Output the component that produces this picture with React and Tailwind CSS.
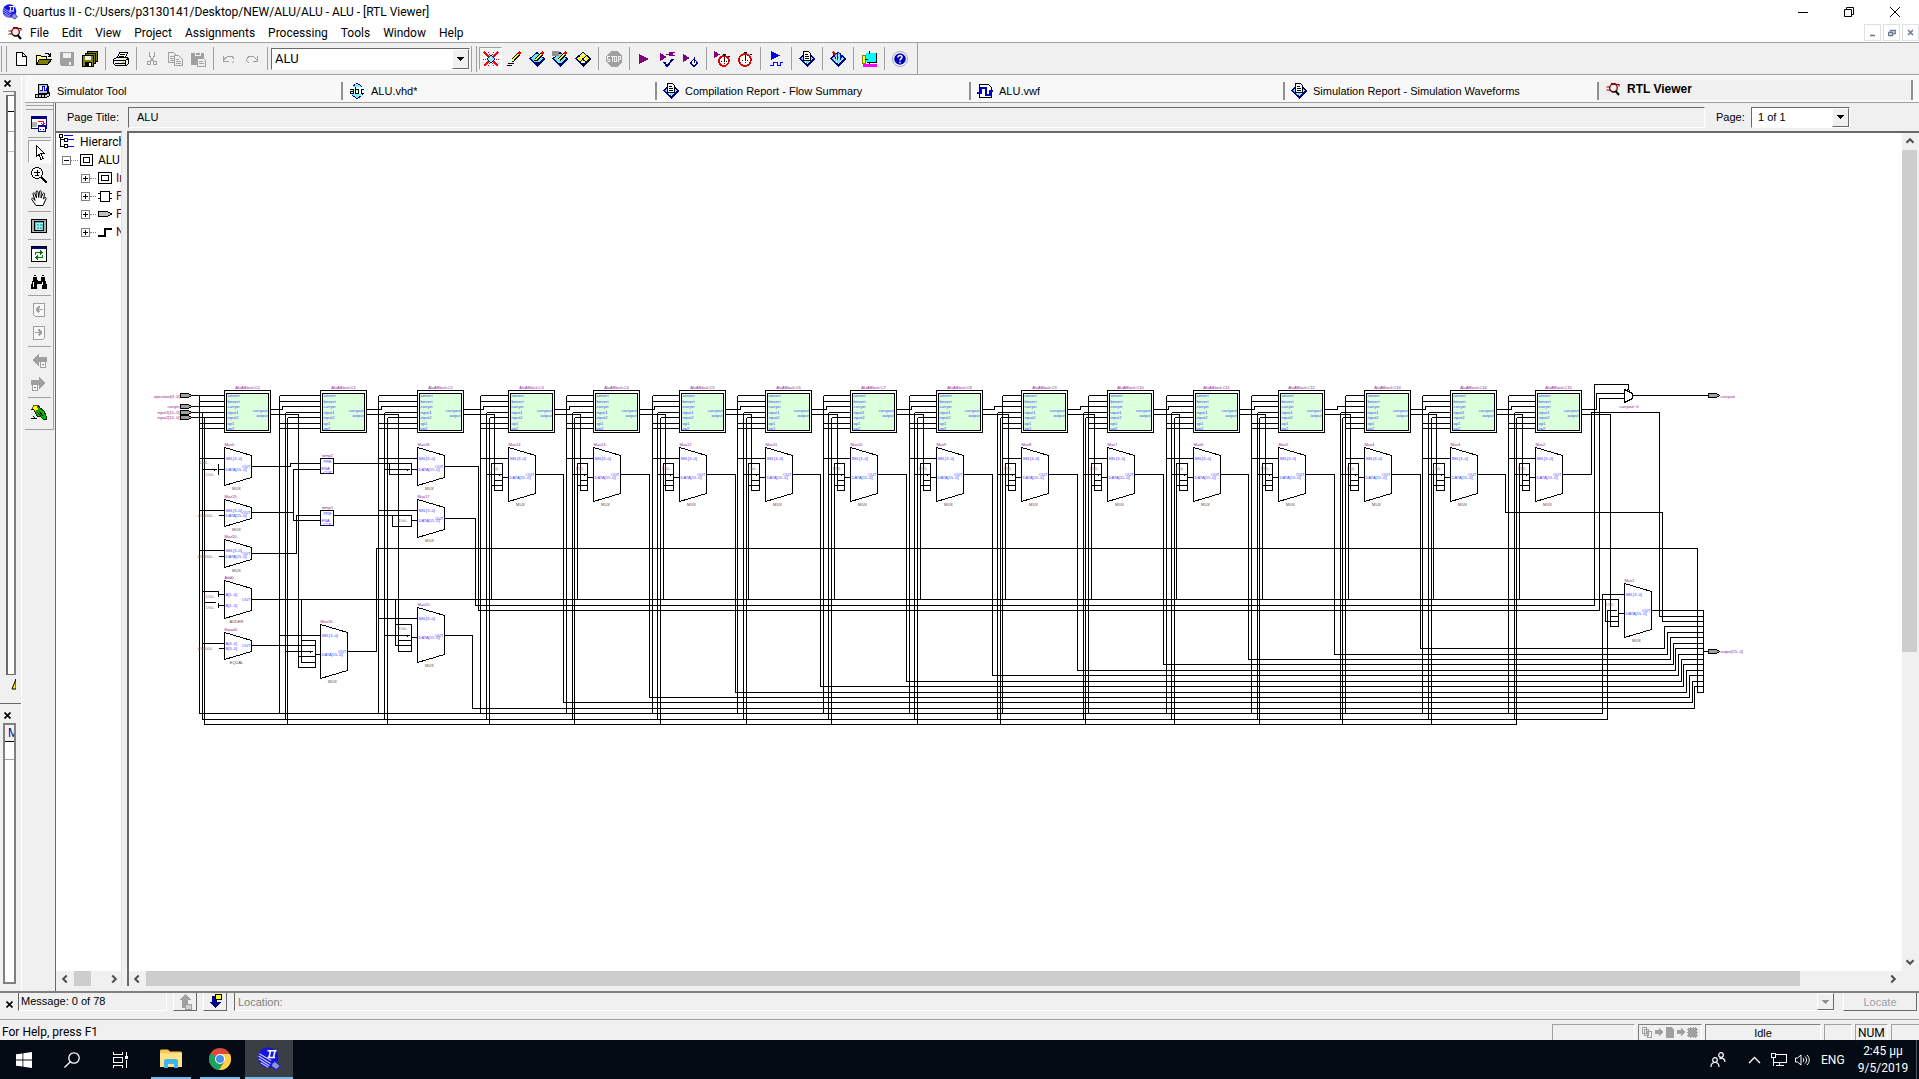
import React from "react";

const UI = "font-['Liberation_Sans',Arial,sans-serif]";
const SEGOE = "font-['Roboto','Open_Sans',sans-serif]";

/* ---------- icons ---------- */
function Icon({ children, size = 16, soft = false }) {
  return (
    <svg
      width={size}
      height={size}
      viewBox="0 0 16 16"
      fill="none"
      stroke="#000"
      shapeRendering={soft ? "auto" : "crispEdges"}
      className="block shrink-0"
      aria-hidden="true"
    >
      {children}
    </svg>
  );
}

const Logo = ({ size = 16 }) => (
  <Icon size={size} soft>
    <circle cx="7.5" cy="7" r="6.8" fill="#1414e0" stroke="none" />
    <path d="M7 2.500h6M9 2.500L8 7M12 2.500L11 7M7 7h5" stroke="#fff" strokeWidth="1" />
    <path d="M1 6l8 5M1.3 8l7 4.5M2.5 10.5l5 3M1.5 4.5l8 4.5" stroke="#c8c8ff" strokeWidth=".8" />
    <path d="M10 11l2-1.5 3.5 3L13 15.2 9.6 13z" fill="#8f95d8" stroke="#22c" strokeWidth=".7" />
  </Icon>
);

const RtlIcon = () => (
  <Icon soft>
    <path d="M1.500 6h4M1.500 9h4M6 2.500h4l2 1.500M12 3.500h2v2" stroke="#800000" strokeWidth="1.200" />
    <circle cx="8.500" cy="7" r="3.800" fill="#e8e8e8" stroke="#800000" strokeWidth="1.300" />
    <path d="M10.500 10l3.500 4" stroke="#000" strokeWidth="2" />
    <path d="M5 9l2 2h3l2-2" stroke="#000" />
    <path d="M6 8l5-3" stroke="#fff" />
  </Icon>
);

const Chip = ({ children }) => (
  <Icon>
    <path d="M0 8l8-7 8 7-8 8z" fill="#000080" stroke="none" />
    <path d="M1 7.500l7-6.500 7 6.500-7 6z" fill="#6fe6ea" stroke="#000080" />
    <path d="M4 8h1M6 6h1M6 10h1M8 8h1M8 4h1M10 6h1M10 10h1M12 8h1M8 12h1" stroke="#fff" />
    {children}
  </Icon>
);
const ReportIcon = () => (
  <Chip>
    <path d="M4.500 .5h5l2 2v7h-7z" fill="#fff" stroke="#000" />
    <path d="M6 3.500h3M6 5.500h4M6 7.500h4" stroke="#000" />
  </Chip>
);
const Pencil = () => (
  <>
    <path d="M13.500 2L7 9" stroke="#000" strokeWidth="3.500" />
    <path d="M12.500 3L7 9" stroke="#ffff00" strokeWidth="1.500" />
    <path d="M14.500 1l-2 2" stroke="#e00000" strokeWidth="2.500" />
  </>
);
const Watch = ({ cx = 8, cy = 9, r = 5.5, c = "#e00000" }) => (
  <>
    <circle cx={cx} cy={cy} r={r} fill="#fff" stroke={c} strokeWidth="1.600" />
    <path d={`M${cx} ${cy - r + 1}v${r}M${cx - 3} ${cy}h1M${cx + 2} ${cy}h1M${cx} ${cy + 2}v1M${cx - 1.5} ${cy - r - 2}h3M${cx} ${cy - r - 2}v2M${cx + r - 1} ${cy - r}l1.500 1`} stroke="#000" />
  </>
);
const Play = ({ d = "M2 3v10l10-5z" }) => <path d={d} fill="#800080" stroke="none" />;

const IC = {
  new: <Icon><path d="M3.500 1.500h6l4 4v9h-10zM9.500 1.500v4h4" fill="#fff" /></Icon>,
  open: <Icon><path d="M.5 13.500v-9h4l1 1h5v3" fill="#ffff80" /><path d="M.5 13.500l3-5h12l-4 5z" fill="#808000" /><path d="M9 2.500h3l2 2M14.500 2v3h-3" /></Icon>,
  save: <Icon><path d="M1 1h14v14H2l-1-1z" fill="#a0a0a0" stroke="none" /><path d="M4 2h8v5H4zM10 11h2v3h-2z" fill="#f0f0f0" stroke="none" /></Icon>,
  saveAll: <Icon><path d="M5.500.5h10v10h-10z" fill="#808000" /><path d="M3.500 2.500h10v10h-10z" fill="#808000" /><path d="M.5 4.500h11v11h-11z" fill="#808000" /><path d="M3 5h6v4H3z" fill="#f0f0f0" stroke="none" /><path d="M3 11h7v4H3z" fill="#000" stroke="none" /><path d="M7 12h2v3H7z" fill="#fff" stroke="none" /></Icon>,
  print: <Icon><path d="M4.500 6.500l2-5h8l-2 5" fill="#fff" /><path d="M.5 8.500l3-2h11l1 2v4l-2 2h-11l-2-2z" fill="#f0f0f0" /><path d="M.5 9.500h12v5M13 9l3-2M7 3.500h5M6 5.500h5M2 12.500h10" /><path d="M9 11.500h2" stroke="#e0d000" /></Icon>,
  cut: <Icon><g stroke="#a0a0a0"><path d="M5.500 1v4l4 5M10.500 1v4l-4 5" /><circle cx="5" cy="12" r="2" /><circle cx="11" cy="12" r="2" /></g></Icon>,
  copy: <Icon><g stroke="#a0a0a0" fill="#f0f0f0"><path d="M1.500 1.500h5l3 3v7h-8z" /><path d="M3 5.500h4M3 7.500h4M3 9.500h4" /><path d="M7.500 4.500h4l4 4v6h-8z" /><path d="M9 8.500h3M9 10.500h5M9 12.500h5" /></g></Icon>,
  paste: <Icon><path d="M1 2h13v12H1z" fill="#a0a0a0" stroke="none" /><path d="M5 1h5v3H5z" fill="#a0a0a0" stroke="#f0f0f0" /><path d="M7.500 7.500h6l2 2v6h-8z" fill="#f0f0f0" stroke="#a0a0a0" /><path d="M9 10.500h4M9 12.500h5" stroke="#a0a0a0" /></Icon>,
  undo: <Icon><path d="M2.500 5v5h5M3 9c3-5 11-5 10 1l-2 2" stroke="#a0a0a0" /></Icon>,
  redo: <Icon><path d="M13.500 5v5h-5M13 9c-3-5-11-5-10 1l2 2" stroke="#a0a0a0" /></Icon>,
  settings: <Icon><path d="M1 1l14 14M15 1L1 15" stroke="#ff0000" strokeWidth="1.500" /><path d="M5 1l6 14M11 1L5 15M0 8h3M13 8h3" stroke="#ff0000" strokeDasharray="1 1" /><path d="M8 4l4 4-4 4-4-4z" fill="#8ff0f0" stroke="#000080" /></Icon>,
  pencil: <Icon><Pencil /><path d="M2 12.500h6M1 14.500h5M6 10.500h2" /></Icon>,
  assign: <Icon><path d="M0 8l8-7 8 7-8 8z" fill="#000080" stroke="none" /><path d="M1 7.500l7-6 7 6-7 6z" fill="#6fe6ea" stroke="#000080" /><Pencil /><path d="M5 9.500h3M6 11.500h4" /></Icon>,
  pins: <Icon><path d="M0 8l8-7 8 7-8 8z" fill="#000080" stroke="none" /><path d="M1 7.500l7-6 7 6-7 6z" fill="#6fe6ea" stroke="#000080" /><Pencil /><path d="M0 0h7v5H0z" fill="#909090" stroke="none" /></Icon>,
  floor: <Icon><path d="M0 8l8-7 8 7-8 8z" fill="#000" stroke="none" /><path d="M1 7.500l7-6.500 7 6.500-7 6z" fill="#ffff00" stroke="#000080" /><path d="M4 5l7 6M5 11l6-6" stroke="#000080" /><path d="M5.500 7.500l1-1M9.500 7.500l1 1M7.500 10.500l1 1M7.500 3.500l1 1" stroke="#fff" strokeWidth="2" /></Icon>,
  stop: <Icon><path d="M5 0h6l5 5v6l-5 5H5l-5-5V5z" fill="#a0a0a0" stroke="none" /><path d="M4 5.500H1.500v2.500h2v2.500H1M5 5.500h3M6.500 5.500V11M8.500 5.500h2v5h-2zM12.500 11V5.500h2v3h-2" stroke="#f0f0f0" /></Icon>,
  play: <Icon><Play /></Icon>,
  playCheck: <Icon><Play d="M0 2v8l7-4z" /><path d="M6 3h3M9 1.500h3v3H9zM13 1.500h2M13 4.500h2" stroke="#800080" fill="#800080" /><path d="M4 11l3 4 6-7" stroke="#000080" strokeWidth="2" /></Icon>,
  playTime: <Icon><Play d="M0 3v8l7-4z" /><path d="M11 8l3.500 4-3.500 3.500L7.500 12z" stroke="#000080" fill="#fff" /><path d="M11 6v6" stroke="#000080" /></Icon>,
  watchPlay: <Icon><Watch cx={10} cy={10} r={5} /><Play d="M0 0v7l6-3.500z" /></Icon>,
  watch: <Icon><Watch cx={8} cy={9} r={6} /></Icon>,
  sim: <Icon><path d="M3 0v9l9-4.500z" fill="#0000ff" stroke="none" /><path d="M2 14.500h3v-3h4v3h3v-3h3" stroke="#0000ff" /></Icon>,
  report: <ReportIcon />,
  view: <Chip><path d="M3 2l3 6M7 1v8M10 2v6M13 4l-3 5" stroke="#0000c0" /><path d="M3 1l3 3" stroke="#e00000" strokeWidth="2" /></Chip>,
  prog: <Icon><path d="M5 2h11v9H5z" fill="#00ffff" stroke="none" /><path d="M1 4h3v8H1z" fill="#ffff00" stroke="#808000" /><path d="M8.500 0v3M8.500 11v2M4 8.500h3M15.500 2v9H6" /><path d="M2 13h14v3H2z" fill="#ff00ff" stroke="none" /></Icon>,
  help: <Icon soft><circle cx="8" cy="8" r="7.500" fill="#fff" stroke="#8888c8" strokeWidth=".8" /><circle cx="8" cy="8" r="5.800" fill="#0000b8" stroke="none" /><path d="M6 6.500c0-3 4.500-2.500 4 0-.3 1.200-2 1.300-2 3M8 10.700v1.500" stroke="#fff" strokeWidth="1.500" /></Icon>,
};

const SIDE = {
  win: <Icon><path d="M.5.5h15v12H.5z" fill="#fff" stroke="#000080" /><path d="M0 0h16v3H0z" fill="#000080" stroke="none" /><path d="M1 6h5v5H1z" fill="#b0b0b0" stroke="none" /><path d="M7 6V5h5v4M10 7l2 2 2-2" stroke="#f00" /><path d="M7.500 9.500h7v6h-7z" fill="#fff" stroke="#0000a0" /><path d="M7 10.500h8M9 13.500h1M12 13.500h1" stroke="#0000a0" /></Icon>,
  pointer: <Icon><path d="M5.500 1.500v11l2.500-2 2 5 2-1-2-5h3.500z" fill="#fff" /></Icon>,
  zoom: <Icon><circle cx="6" cy="6" r="5.500" fill="#f8f8f8" /><path d="M3 5.500h6M6 3v5M4 8.500h4" /><path d="M10 10l6 6" strokeWidth="2" /></Icon>,
  hand: <Icon soft><path d="M5 15.500L.8 9.500c-.6-1.400 1-1.800 1.700-.8L4 10.500 2 4c-.2-1.300 1.400-1.500 1.800-.4L5.500 8 5 2c0-1.400 1.700-1.400 2 0l.7 5.500L8.500 1.500c.3-1.200 1.800-1 1.800.3L10 8l2-4.500c.6-1 1.900-.5 1.600.7L12.500 9l1.400-1.300c.8-.6 1.700.2 1.200 1L12 15.500z" fill="#fff" /></Icon>,
  rect: <Icon><path d="M.5 1.500h15v13H.5z" fill="#b0b0b0" /><path d="M3.500 3.500h9v9h-9z" fill="#40c8c8" /><path d="M5 5h7M5 8h7M5 11h7M5.500 5v7M8.500 5v7" stroke="#a0f0f0" /></Icon>,
  swap: <Icon><path d="M.5.5h15v15H.5z" fill="#fff" /><path d="M1 1.500h14" stroke="#000080" strokeWidth="2" /><path d="M4.500 9V6.500H11M9 4.500l2.500 2L9 8.500M11.500 9v2.500H5M7 9.500l-2.500 2 2.500 2" stroke="#008000" strokeWidth="1.200" /></Icon>,
  find: <Icon><path d="M2 3h4v3l1 1h2l1-1V3h4v3l2 5v4h-5v-5H6v5H0v-4l2-5z" fill="#000" stroke="none" /><path d="M3.500 1v1M12.500 1v1M2.500 8v5M11.500 8v3" stroke="#fff" /><path d="M3 1.500h2M11 1.500h2" /></Icon>,
  pagePrev: <Icon><path d="M2.500 1.500h11v13h-9l-2-2z" stroke="#a0a0a0" fill="#f8f8f8" /><path d="M5 7.500h7M5.500 7.500l3-3M5.500 7.500l3 3" stroke="#a0a0a0" strokeWidth="1.500" /></Icon>,
  pageNext: <Icon><path d="M2.500 1.500h11v11l-2 2h-9z" stroke="#a0a0a0" fill="#f8f8f8" /><path d="M4 7.500h7M10.500 7.500l-3-3M10.500 7.500l-3 3" stroke="#a0a0a0" strokeWidth="1.500" /></Icon>,
  back: <Icon><path d="M1 7l7-6v3h8v5H8v4z" fill="#a0a0a0" stroke="none" /><path d="M9.500 8.500h5v6h-5z" fill="#f8f8f8" stroke="#a0a0a0" /><path d="M11 11.500h2" stroke="#808080" /></Icon>,
  fwd: <Icon><path d="M15 7L8 1v3H0v5h8v4z" fill="#a0a0a0" stroke="none" /><path d="M1.500 8.500h5v6h-5z" fill="#f8f8f8" stroke="#a0a0a0" /><path d="M3 11.500h2" stroke="#808080" /></Icon>,
  bird: <Icon><path d="M3 1h4l2 3 4 3 2 5v3h-3l-2-2-4-1-2-4z" fill="#00b800" stroke="#003800" /><path d="M2.500 1.500h4l1 4-3 2-3-3z" fill="#ffff00" stroke="#606000" /><path d="M0 5h3M0 14.500h6M2 12l2 2M8 7l4 5M6 8l4 4" /></Icon>,
};

const AbcIcon = () => (
  <Icon>
    <path d="M8 0l5 4v8l-5 4-5-4V4z" fill="#80f0f0" stroke="#000080" strokeDasharray="3 1" />
    <rect x="0" y="4" width="16" height="7" fill="#e8ffff" stroke="none" />
    <path d="M1 6.500h3v4H1.500v-2H4M6.500 4v6.500h3v-4h-3M15 6.500h-3v4h3" stroke="#000" />
  </Icon>
);
const SimToolIcon = () => (
  <Icon>
    <path d="M3.500 1.500h9v9h-9z" fill="#c0c0c0" /><path d="M5 3h6v5H5z" fill="#fff" stroke="none" />
    <path d="M5 7.500h2v-4h2v4h2v-3" stroke="#00f" /><path d="M.5 11.500h11l3-2v3l-3 2h-11z" fill="#d0d0d0" /><path d="M13.500 3v7" /><path d="M3.500 12v2M6.500 12v2M9.500 12v2" />
  </Icon>
);
const VwfIcon = () => (
  <Icon>
    <path d="M2.500 1.500h9l3 3v10h-12z" fill="#fff" /><path d="M0 9.500h4v-5h5v7h4v-4h3" stroke="#0000c0" strokeWidth="2" />
  </Icon>
);

/* ---------- small controls ---------- */
const ToolButton = ({ label, pressed, children }) => (
  <button
    type="button"
    aria-label={label}
    className={
      pressed
        ? "flex h-[23px] w-[23px] shrink-0 items-center justify-center border border-b-white border-l-[#a0a0a0] border-r-white border-t-[#a0a0a0] bg-[#f8f8f8]"
        : "flex h-[23px] w-[23px] shrink-0 items-center justify-center"
    }
  >
    {children}
  </button>
);
const Sep = () => (
  <div className="flex h-[23px] w-2 shrink-0 justify-center"><div className="w-px bg-[#a0a0a0]" /></div>
);
const HSep = () => <div className="my-[2px] h-px w-[23px] shrink-0 bg-[#a0a0a0]" />;
const Grip = () => (
  <div className="flex h-[26px] w-[9px] shrink-0 gap-1 pl-px">
    <div className="w-px bg-[#a0a0a0]" /><div className="w-px bg-[#a0a0a0]" />
  </div>
);
const Arrow = ({ dir }) => {
  const d = { left: "M10 4L6 8l4 4", right: "M6 4l4 4-4 4", up: "M4 10l4-4 4 4", down: "M4 6l4 4 4-4" }[dir];
  return (
    <button type="button" aria-label={`Scroll ${dir}`} className="flex h-[15px] w-[15px] shrink-0 items-center justify-center">
      <svg width="14" height="14" viewBox="0 0 16 16" fill="none" stroke="#505050" strokeWidth="2.4" aria-hidden="true"><path d={d} /></svg>
    </button>
  );
};
const DropButton = ({ muted }) => (
  <span className="pointer-events-none absolute inset-y-0 right-0 flex w-[17px] items-center justify-center border border-b-[#696969] border-l-white border-r-[#696969] border-t-white bg-[#f0f0f0]">
    <svg width="7" height="4" viewBox="0 0 7 4" shapeRendering="crispEdges" aria-hidden="true"><path d="M0 0h7L3.500 4z" fill={muted ? "#909090" : "#000"} /></svg>
  </span>
);

/* ---------- schematic ---------- */
// Per slice: block x, control bus, input1 bus, input2 bus, constant tap, slice-output tap, carry step
const SLICES = [
  { x: 224, a: 199, b: 202, c: 204 },
  { x: 320, a: 279, b: 285, c: 287, e: 298, s: 282 },
  { x: 417, a: 378, b: 384, c: 387, e: 398, s: 381 },
  { x: 508, a: 480, b: 486, c: 489, d: 491, e: 494, s: 483, o: 563, oy: 702 },
  { x: 593, a: 566, b: 572, c: 574, d: 577, e: 580, s: 569, o: 649, oy: 697 },
  { x: 679, a: 652, b: 657, c: 660, d: 663, e: 665, s: 654, o: 735, oy: 692 },
  { x: 765, a: 737, b: 743, c: 746, d: 748, e: 751, s: 740, o: 820, oy: 686 },
  { x: 850, a: 823, b: 828, c: 831, d: 834, e: 837, s: 826, o: 906, oy: 681 },
  { x: 936, a: 909, b: 914, c: 917, d: 920, e: 923, s: 911, o: 992, oy: 675 },
  { x: 1021, a: 1002, b: 997, c: 1000, d: 1005, e: 1008, s: 994, o: 1077, oy: 670 },
  { x: 1107, a: 1088, b: 1083, c: 1085, d: 1091, e: 1094, s: 1080, o: 1163, oy: 664 },
  { x: 1193, a: 1166, b: 1171, c: 1174, d: 1176, e: 1179, s: 1168, o: 1248, oy: 659 },
  { x: 1278, a: 1251, b: 1257, c: 1259, d: 1262, e: 1265, s: 1254, o: 1334, oy: 654 },
  { x: 1364, a: 1345, b: 1340, c: 1342, d: 1348, e: 1350, s: 1337, o: 1420, oy: 648 },
  { x: 1450, a: 1422, b: 1428, c: 1431, d: 1433, e: 1436, s: 1425, o: 1505 },
  { x: 1535, a: 1508, b: 1514, c: 1516, d: 1519, e: 1522, s: 1511 },
];
// Riser x and final y for output bits, from the outermost bus inwards
const RISERS = [
  [708, 472, 1694, 686], [702, 563, 1692, 681], [697, 649, 1689, 675], [692, 735, 1686, 670],
  [686, 820, 1683, 664], [681, 906, 1681, 659], [675, 992, 1678, 654], [670, 1077, 1675, 648],
  [664, 1163, 1673, 643], [659, 1248, 1670, 637], [654, 1334, 1667, 632], [648, 1420, 1664, 626],
];
const IN_PORTS = [["ainvert", 395], ["binvert", 401], ["carryin", 406], ["input1", 412], ["input2", 417], ["op1", 423], ["op2", 428]];

const T = ({ x, y, c = "#3c3cff", anchor = "start", children }) => (
  <text x={x} y={y} fill={c} textAnchor={anchor}>{children}</text>
);
const P = "#901890";

function Slice({ x, n }) {
  return (
    <g>
      <path d={`M${x} 390h46v42h-46z`} fill="#fff" />
      <path d={`M${x + 2} 393h42v37h-42z`} fill="#dcffdc" />
      <T x={x + 23} y={388} c={P} anchor="middle">{`AluABlock:C${n}`}</T>
      {IN_PORTS.map(([t, y]) => <T key={t} x={x + 3} y={y + 1}>{t}</T>)}
      <T x={x + 43} y={411} anchor="end">carryout</T>
      <T x={x + 43} y={416} anchor="end">output</T>
    </g>
  );
}
function Trap({ x, y, h, name, kind = "MUX", p1, p2, y1, y2, yo, cut = 8 }) {
  return (
    <g>
      <path d={`M${x} ${y}l27 ${cut}v${h - 2 * cut}l-27 ${cut}z`} fill="#fff" />
      <T x={x} y={y - 2} c={P}>{name}</T>
      <T x={x + 1} y={y1 + 1}>{p1}</T>
      <T x={x + 1} y={y2 + 1}>{p2}</T>
      <T x={x + 26} y={yo + 1} anchor="end">OUT</T>
      <T x={x + 12} y={y + h + 4} c="#604040" anchor="middle">{kind}</T>
    </g>
  );
}
const Mux = (p) => <Trap p1="SEL[3..0]" p2="DATA[15..0]" {...p} />;
const PortShape = ({ x, y }) => <path d={`M${x} ${y - 2}h8l3 2-3 2h-8z`} fill="#a0a0a0" />;

function Schematic() {
  const w = [];
  SLICES.forEach((s, i) => {
    w.push(`M${s.a} 395V713M${s.b} 412V719M${s.c} 417V724`);
    w.push([395, 401, 423, 428].map((y) => `M${s.a} ${y}H${s.x}`).join(""));
    w.push(`M${s.b} 412H${s.x}M${s.c} 417H${s.x}`);
    if (i > 0) {
      const p = SLICES[i - 1].x + 46;
      w.push(`M${p} 409H${s.s}V406H${s.x}`);
      w.push(`M${p} 414H${s.e}V${i === 1 ? 667 : i === 2 ? 651 : 490}`);
    }
    if (i > 2) {
      const r = s.x - 6;
      w.push(`M${s.a} 458H${s.x}M${s.d} 599V463H${r}V490H${s.e}M${s.e} 480H${r}M${s.d} 485H${r}`);
      w.push(`M${s.b} 474H${r - 1}m-2 -1v2M${r} 477H${s.x}`);
    }
    if (s.oy) w.push(`M${s.x + 27} 474H${s.o}V${s.oy}`);
  });
  RISERS.forEach(([y, x0, x1, y1]) => w.push(`M${x0} ${y}H${x1}V${y1}H1703`));
  w.push(
    "M199 713H1602V594H1624M202 719H1607V610H1616M204 724H1516",
    "M191 395H199M191 406H224M191 412H202M191 417H204",
    "M199 458H224M202 469H216M214 468v2M218 463V474M218 469H224M251 466H290V463H320",
    "M199 510H224M218 515H224M251 512H293M320 469H293V520H320",
    "M199 550H224M218 556H224M251 553H296V515H320",
    "M202 591H218V596M218 594H224M204 602H215M218 602V607M218 605H224M251 599H1618",
    "M202 643H224M218 648H224M251 645H315",
    "M333 463H411M333 515H411M378 458H417M389 463V474H411V463M384 469H409M407 468v2M411 469H417",
    "M378 510H417M392 515V526H411V515M411 520H417",
    "M444 466H478V610H1599V398H1624M444 518H475V605H1594V384H1628V391",
    "M279 635H320M301 599V662H315M298 667H315V640H301M285 651H312M310 650v2M298 656H315M315 654H320M347 651H376V548H1697V692H1703",
    "M378 618H417M395 599V645H411M395 624H411V651H398M398 640H411M384 635H409M407 634v2M411 637H417M444 635H472V708",
    "M1477 474H1505V512H1662V621H1703M1562 474H1591V412H1659V616H1703",
    "M1581 409H1596V393H1624M1581 414H1610V626H1618V599M1605 599V621H1618M1610 616H1618M1618 613H1624",
    "M1651 610H1703V692M1703 651H1708M1632 395H1708"
  );
  return (
    <svg width="1760" height="700" viewBox="128.500 132.500 1760 700" className="block shrink-0" role="img" aria-label="RTL schematic of ALU">
      <g fill="none" stroke="#000" shapeRendering="crispEdges">
        <path d={w.join("")} />
      </g>
      <g stroke="#000" shapeRendering="crispEdges" className="font-['Liberation_Sans',Arial,sans-serif] text-[4px] [&_text]:stroke-none">
        {SLICES.map((s, i) => <Slice key={s.x} x={s.x} n={i} />)}
        {SLICES.slice(3).map((s, i) => (
          <g key={s.x}>
            <Mux x={s.x} y={447} h={54} name={`Mux${14 - i}`} y1={458} y2={477} yo={474} />
            <T x={s.x - 18} y={469} c="#806868">1&apos;h0..</T>
          </g>
        ))}
        <Mux x={224} y={447} h={38} name="Mux0" y1={458} y2={469} yo={466} />
        <Mux x={224} y={499} h={27} name="Mux19" y1={510} y2={515} yo={512} />
        <Mux x={224} y={539} h={28} name="Mux20" y1={550} y2={556} yo={553} />
        <Trap x={224} y={580} h={38} name="Add0" kind="ADDER" p1="A[1..0]" p2="B[1..0]" y1={594} y2={605} yo={599} />
        <Trap x={224} y={632} h={27} name="Equal0" kind="EQUAL" p1="A[3..0]" p2="B[3..0]" y1={643} y2={648} yo={645} />
        <Mux x={417} y={447} h={38} name="Mux18" y1={458} y2={469} yo={466} />
        <Mux x={417} y={499} h={38} name="Mux17" y1={510} y2={520} yo={518} />
        <Mux x={320} y={624} h={54} name="Mux16" y1={635} y2={654} yo={651} />
        <Mux x={417} y={607} h={55} name="Mux15" y1={618} y2={637} yo={635} />
        <Mux x={1624} y={583} h={54} name="Mux1" y1={594} y2={613} yo={610} />
        {[[197, 516], [197, 557], [197, 649]].map(([x, y]) => <T key={y} x={x} y={y} c="#806868">4&apos;h0000..</T>)}
        {[[199, 463], [205, 475], [205, 597], [205, 608], [398, 521], [398, 629], [1605, 605]].map(([x, y]) => <T key={`${x}-${y}`} x={x} y={y} c="#806868">1&apos;h0..</T>)}
        {[[458, "temp2"], [510, "temp1"]].map(([y, t]) => (
          <g key={t}>
            <path d={`M320 ${y}h13v15h-13z`} fill="#fff" />
            <T x={327} y={y - 2} c={P} anchor="middle">{t}</T>
            <T x={327} y={y + 4} anchor="middle">PRE</T>
            <T x={321} y={y + 11}>ENA</T>
            <T x={327} y={y + 15} anchor="middle">CLR</T>
          </g>
        ))}
        <path d="M1624 389v13l8-4v-5zM1624 391l3-2 3 1" fill="#fff" />
        <T x={1619} y={407} c={P}>carryout~0</T>
        <PortShape x={180} y={395} /><PortShape x={180} y={406} /><PortShape x={180} y={412} /><PortShape x={180} y={417} />
        <PortShape x={1708} y={395} /><PortShape x={1708} y={651} />
        <T x={179} y={397} c={P} anchor="end">operation[3..0]</T>
        <T x={179} y={407} c={P} anchor="end">carryin</T>
        <T x={179} y={413} c={P} anchor="end">input1[15..0]</T>
        <T x={179} y={418} c={P} anchor="end">input2[15..0]</T>
        <T x={1720} y={397} c={P}>carryout</T>
        <T x={1720} y={652} c={P}>output[15..0]</T>
      </g>
    </svg>
  );
}

/* ---------- tree ---------- */
const TREE = [
  ["Instances", <g key="i"><path d="M1.500 2.500h13v11h-13zM4.500 5.500h7v5h-7z" fill="#fff" strokeWidth="1.400" /></g>],
  ["Primitives", <g key="p"><path d="M3.500 3.500h9v10h-9z" fill="#fff" /><path d="M1 5.500h2M1 10.500h2M13 5.500h2M13 10.500h2" /></g>],
  ["Pins", <g key="q"><path d="M1 5.500h9l5 2.500-5 2.500H1z" fill="#c0c0c0" /></g>],
  ["Nets", <g key="n"><path d="M1 11.500h7v-7h7" strokeWidth="2" /></g>],
];
const Expander = ({ plus }) => (
  <svg width="9" height="9" viewBox="0 0 9 9" fill="#fff" stroke="#808080" shapeRendering="crispEdges" className="block shrink-0" aria-hidden="true">
    <path d="M.5.5h8v8h-8z" /><path d={plus ? "M2 4.500h5M4.500 2v5" : "M2 4.500h5"} stroke="#000" />
  </svg>
);

const TOOLS_A = ["new", "open", "save", "saveAll", "|", "print", "|", "cut", "copy", "paste", "|", "undo", "redo", "|"];
const TOOLS_B = ["settings", "pencil", "assign", "pins", "floor", "|", "stop", "|", "play", "playCheck", "playTime", "|", "watchPlay", "watch", "|", "sim", "|", "report", "|", "view", "|", "prog", "|", "help"];
const renderTools = (list) => list.map((k, i) => (k === "|" ? <Sep key={i} /> : <ToolButton key={i} label={k} pressed={k === "settings"}>{IC[k]}</ToolButton>));

const TABS = [
  ["Simulator Tool", <SimToolIcon key="a" />], ["ALU.vhd*", <AbcIcon key="b" />],
  ["Compilation Report - Flow Summary", <ReportIcon key="c" />], ["ALU.vwf", <VwfIcon key="d" />],
  ["Simulation Report - Simulation Waveforms", <ReportIcon key="e" />],
];
const SUNK = "border border-b-white border-l-[#696969] border-r-white border-t-[#696969]";
const RAISED = "border border-b-[#696969] border-l-white border-r-[#696969] border-t-white";

const CloseX = () => (
  <button type="button" aria-label="Close panel" className="flex h-3 w-[9px] items-center justify-center">
    <svg width="7" height="7" viewBox="0 0 7 7" stroke="#000" strokeWidth="1.600" aria-hidden="true"><path d="M.5.5l6 6M6.500.5l-6 6" /></svg>
  </button>
);

function LeftDock() {
  return (
    <aside className="flex w-[22px] shrink-0 flex-col border-r border-white">
      <div className="flex grow-[2.280] basis-0 flex-col border-b border-[#696969] pl-[3px]">
        <div className="flex h-[16px] shrink-0 items-center pt-px"><CloseX /></div>
        <div className="flex w-[13px] grow flex-col border-r-2 border-t border-[#808080] pt-[3px]">
          <div className="ml-[3px] grow border-b border-l-2 border-t border-[#696969] bg-white">
            <div className="h-4 border-b border-black" /><div className="h-5 border-b border-[#a0a0a0]" /><div className="h-5 border-b border-[#c0c0c0]" />
          </div>
        </div>
        <div className="flex h-7 w-[13px] shrink-0 items-start justify-end overflow-hidden pt-1">
          <svg width="5" height="12" viewBox="0 0 5 12" aria-hidden="true"><path d="M5 0L1 10h4z" fill="#ffff00" stroke="#000" /></svg>
        </div>
      </div>
      <div className="flex grow basis-0 flex-col pb-[7px] pl-[3px] pt-1">
        <div className="flex h-[15px] shrink-0 items-center"><CloseX /></div>
        <div className="w-[13px] grow border-2 border-[#808080] bg-white">
          <div className="h-[17px] overflow-hidden border-b border-black bg-[#f0f0f0] pl-[3px] text-[12px] leading-4 text-[#0000a0]">M</div>
          <div className="h-[18px] border-b border-[#a0a0a0]" />
        </div>
      </div>
    </aside>
  );
}

export default function App() {
  return (
    <div className={`flex h-screen min-h-[700px] w-full flex-col overflow-hidden bg-[#f0f0f0] text-[11px] leading-4 text-black ${UI}`}>
      {/* title bar */}
      <header className={`bg-white text-[12px] ${SEGOE}`}>
        <div className="flex h-[23px] items-center pl-[2px]">
          <Logo />
          <h1 className="ml-[5px] grow">Quartus II - C:/Users/p3130141/Desktop/NEW/ALU/ALU - ALU - [RTL Viewer]</h1>
          <div className="flex items-center">
            {[["Minimize", "M0 5.500h10"], ["Restore", "M.5 2.500h7v7h-7zM2.500 2v-1.500h7v7H8"], ["Close", "M0 0l10 10M10 0L0 10"]].map(([n, d]) => (
              <button key={n} type="button" aria-label={n} className="flex h-5 w-[46px] items-center justify-center last:mr-[1px]">
                <svg width="10" height="10" viewBox="0 0 10 10" fill="none" stroke="#000" aria-hidden="true"><path d={d} /></svg>
              </button>
            ))}
          </div>
        </div>
        <div className="flex h-5 items-center border-b border-[#a0a0a0] pl-[7px]">
          <RtlIcon />
          <nav className="flex grow">
            {["File", "Edit", "View", "Project", "Assignments", "Processing", "Tools", "Window", "Help"].map((m) => (
              <button key={m} type="button" className="pl-[7px] pr-[6px] leading-5">{m}</button>
            ))}
          </nav>
          <div className="flex gap-[2px]">
            {[["Minimize page", "M1 6.500h5"], ["Restore page", "M.5 3.500h4v3h-4zM2.500 2.500v-1h5v3h-2"], ["Close page", "M1 1l5 5M6 1L1 6"]].map(([n, d]) => (
              <button key={n} type="button" aria-label={n} className="flex h-[17px] w-[17px] items-center justify-center border border-[#e0e0e0]">
                <svg width="8" height="8" viewBox="0 0 8 8" fill="none" stroke="#6b7b90" strokeWidth="1.600" aria-hidden="true"><path d={d} /></svg>
              </button>
            ))}
          </div>
        </div>
      </header>

      {/* toolbar */}
      <div className="flex h-8 shrink-0 items-center border-b border-[#a0a0a0]" role="toolbar">
        <Grip />
        {renderTools(TOOLS_A)}
        <div className={`relative h-[22px] w-[199px] bg-white ${SUNK}`}>
          <select aria-label="Entity" className={`h-full w-full appearance-none bg-transparent pl-[3px] text-[13px] outline-none ${SEGOE}`}><option>ALU</option></select>
          <DropButton />
        </div>
        <Grip />
        {renderTools(TOOLS_B)}
        <div className="ml-[6px] h-full w-px bg-[#a0a0a0]" />
      </div>

      {/* work area */}
      <div className="flex min-h-0 grow border-b-2 border-[#808080]">
        <LeftDock />
        <div className="flex min-w-0 grow flex-col pl-[3px]">
          <div className="flex h-7 shrink-0 items-end border-b border-[#a0a0a0] bg-[#f8f8f8] pb-[2px] pl-1 pr-[6px]" role="tablist">
            {TABS.map(([t, icon]) => (
              <button key={t} type="button" role="tab" aria-selected="false" className="flex h-[18px] min-w-0 flex-1 items-center gap-[6px] border-r-2 border-[#909090] pl-[6px] text-left">
                {icon}<span className="truncate">{t}</span>
              </button>
            ))}
            <button type="button" role="tab" aria-selected="true" className="flex h-5 min-w-0 flex-1 items-center gap-[6px] border-r-2 border-[#909090] bg-[#f0f0f0] pb-[3px] pl-[6px] text-left text-[12px] font-bold">
              <RtlIcon /><span>RTL Viewer</span>
            </button>
          </div>

          <div className="flex min-h-0 grow">
            <div className="flex w-[31px] shrink-0 flex-col border-r border-[#696969]">
              <div className="flex w-[29px] flex-col items-center border-b border-r border-[#a0a0a0] pb-[6px] pt-[2px]">
                <div className="mb-[2px] h-[5px] w-[27px] border-y border-[#a0a0a0]" />
                <ToolButton label="Overview">{SIDE.win}</ToolButton><HSep />
                <ToolButton label="Select" pressed>{SIDE.pointer}</ToolButton>
                <ToolButton label="Zoom">{SIDE.zoom}</ToolButton>
                <ToolButton label="Hand">{SIDE.hand}</ToolButton><HSep />
                <ToolButton label="Full screen">{SIDE.rect}</ToolButton><HSep />
                <ToolButton label="Refresh">{SIDE.swap}</ToolButton><HSep />
                <ToolButton label="Find">{SIDE.find}</ToolButton><HSep />
                <ToolButton label="Previous page">{SIDE.pagePrev}</ToolButton>
                <ToolButton label="Next page">{SIDE.pageNext}</ToolButton><HSep />
                <ToolButton label="Back">{SIDE.back}</ToolButton>
                <ToolButton label="Forward">{SIDE.fwd}</ToolButton><HSep />
                <ToolButton label="Bird view">{SIDE.bird}</ToolButton>
              </div>
            </div>

            <div className="flex min-w-0 grow flex-col">
              <div className="flex h-7 shrink-0 items-center">
                <label htmlFor="page-title" className="w-[72px] shrink-0 pl-[11px]">Page Title:</label>
                <input id="page-title" readOnly value="ALU" className={`h-[21px] min-w-0 grow bg-[#f0f0f0] pl-2 outline-none ${SUNK}`} />
                <label htmlFor="page-no" className="ml-[11px] w-[35px]">Page:</label>
                <div className={`relative mr-[69px] h-[21px] w-[99px] bg-white ${SUNK}`}>
                  <select id="page-no" className="h-full w-full appearance-none bg-transparent pl-[6px] outline-none"><option>1 of 1</option></select>
                  <DropButton />
                </div>
              </div>

              <div className="flex min-h-0 grow pb-[5px]">
                <div className="mr-[5px] flex w-[66px] shrink-0 flex-col overflow-hidden border-r border-t-2 border-r-[#e0e0e0] border-t-[#696969] bg-white">
                  <ul className={`grow overflow-hidden whitespace-nowrap text-[12px] leading-[18px] ${SEGOE}`}>
                    <li className="flex h-[18px] items-center gap-[5px] pl-[3px]">
                      <Icon><path d="M1.500 1v11h4M1.500 5.500h4" /><path d="M0 0h3v3H0zM5 4h3v3H5zM5 10h3v3H5z" fill="#fff" /><path d="M5 1.500h9M9 5.500h6M9 12.500h6" stroke="#00f" /></Icon>Hierarchy
                    </li>
                    <li className="flex h-[18px] items-center pl-[6px]">
                      <Expander /><span className="mr-px w-[7px] shrink-0 border-t border-dotted border-[#808080]" />
                      <Icon><path d="M1.500 2.500h12v11h-12zM4.500 5.500h6v5h-6z" fill="#fff" strokeWidth="1.400" /></Icon>
                      <span className="pl-[3px]">ALU</span>
                    </li>
                    {TREE.map(([t, g]) => (
                      <li key={t} className="flex h-[18px] items-center pl-[25px]">
                        <Expander plus /><span className="mr-px w-[6px] shrink-0 border-t border-dotted border-[#808080]" />
                        <Icon>{g}</Icon><span className="pl-[3px] text-[#600030]">{t}</span>
                      </li>
                    ))}
                  </ul>
                  <div className="flex h-[15px] items-center bg-[#f0f0f0] pl-px"><Arrow dir="left" /><div className="ml-[2px] h-full w-[17px] bg-[#cdcdcd]" /><div className="grow" /><Arrow dir="right" /></div>
                </div>

                <main className="flex min-w-0 grow flex-col border-l-2 border-t-2 border-[#696969]">
                  <div className="flex min-h-0 grow">
                    <div className="min-w-0 grow overflow-hidden bg-white"><Schematic /></div>
                    <div className="mr-[2px] flex w-[15px] shrink-0 flex-col pb-[2px]">
                      <Arrow dir="up" /><div className="mt-[2px] h-[60%] bg-[#cdcdcd]" /><div className="grow" /><Arrow dir="down" />
                    </div>
                  </div>
                  <div className="mr-[19px] flex h-[15px] shrink-0 items-center">
                    <Arrow dir="left" /><div className="ml-[2px] h-full w-[93.400%] bg-[#cdcdcd]" /><div className="grow" /><Arrow dir="right" />
                  </div>
                </main>
              </div>
            </div>
          </div>
        </div>
      </div>

      {/* message bar */}
      <div className="flex h-[27px] shrink-0 items-start border-b border-[#a0a0a0]">
        <div className="w-[18px] shrink-0 pl-[5px] pt-[5px]"><CloseX /></div>
        <div className="h-[18px] w-[149px] border-b border-l border-r border-b-white border-l-[#696969] border-r-white pl-[2px]">Message: 0 of 78</div>
        <button type="button" aria-label="Previous message" className={`ml-[6px] flex h-[18px] w-6 items-center justify-center ${RAISED} border-t-0`}>
          <Icon><path d="M8 0l6 6h-3v8H5V6H2z" fill="#a0a0a0" stroke="none" /><path d="M8.500 10.500h6v5h-6z" fill="#d0d0d0" stroke="#a0a0a0" /></Icon>
        </button>
        <button type="button" aria-label="Next message" className={`ml-[6px] mr-px flex h-[18px] w-6 items-center justify-center ${RAISED} border-t-0`}>
          <Icon><path d="M5 2h5v6h4l-6 6-6-6h3z" fill="#000080" stroke="none" /><path d="M8.500.5h6v5h-6z" fill="#ffff00" /></Icon>
        </button>
        <div className="relative ml-[6px] h-[18px] min-w-0 grow border-b border-l border-b-white border-l-[#696969]">
          <select aria-label="Location" disabled className="h-full w-full appearance-none bg-transparent pl-[3px] text-[#808080] opacity-100"><option>Location:</option></select>
          <DropButton muted />
        </div>
        <button type="button" disabled className={`ml-[9px] mr-[2px] h-[18px] w-[74px] text-[#a0a0a0] ${RAISED} border-t-0`}>Locate</button>
      </div>

      {/* status bar */}
      <div className={`flex h-5 shrink-0 items-center pl-[2px] text-[12px] ${SEGOE}`}>
        <div className="grow pt-[3px]">For Help, press F1</div>
        <div className="mr-[3px] mt-1 h-4 w-[83px] border border-b-0 border-[#a0a0a0] border-r-white" />
        <div className="mr-[3px] mt-1 flex h-4 w-[64px] items-center border border-b-0 border-[#808080] border-r-white">
          <svg width="60" height="13" viewBox="0 0 60 13" shapeRendering="crispEdges" fill="#a0a0a0" aria-hidden="true">
            <path d="M3.500 1.500h4v6h-4zM5.500 3.500h4v6h-4zM8.500 5.500h4v6h-4z" fill="#f0f0f0" stroke="#a0a0a0" />
            <path d="M16 4h4V2l5 4-5 4V8h-4zM27 1h5l3 3v8h-8zM38 4h4V2l5 4-5 4V8h-4zM49 2h9v9h-9z" />
            <path d="M48 3.500h11M48 6.500h11M48 9.500h11M51.500 1v11M54.500 1v11M56.500 1v11" stroke="#a0a0a0" />
          </svg>
        </div>
        <div className={`mr-[3px] mt-1 h-4 w-[116px] border border-b-0 border-[#808080] border-r-white text-center text-[11px] leading-4 ${UI}`}>Idle</div>
        <div className="mr-[3px] mt-1 h-4 w-[28px] border border-b-0 border-[#a0a0a0] border-r-white" />
        <div className="mr-[3px] mt-1 h-4 w-[33px] border border-b-0 border-[#a0a0a0] border-r-white pl-[2px] leading-4">NUM</div>
        <div className="mt-1 h-4 w-[28px] border border-b-0 border-r-0 border-[#a0a0a0]" />
      </div>

      {/* taskbar */}
      <footer className={`flex h-[39px] shrink-0 items-stretch bg-[#050b14] text-[12px] text-white ${SEGOE}`}>
        <button type="button" aria-label="Start" className="flex w-12 items-center justify-center">
          <svg width="16" height="16" viewBox="0 0 16 16" fill="#fff" aria-hidden="true"><path d="M0 2.300l6.500-.9v6.200H0zM7.300 1.300L16 0v7.600H7.300zM0 8.400h6.500v6.200L0 13.700zM7.300 8.400H16V16l-8.700-1.200z" /></svg>
        </button>
        <button type="button" aria-label="Search" className="flex w-12 items-center justify-center">
          <svg width="16" height="16" viewBox="0 0 16 16" fill="none" stroke="#fff" strokeWidth="1.300" aria-hidden="true"><circle cx="10" cy="6" r="5.200" /><path d="M6.300 9.700L.5 15.500" /></svg>
        </button>
        <button type="button" aria-label="Task view" className="flex w-12 items-center justify-center">
          <svg width="17" height="16" viewBox="0 0 17 16" fill="none" stroke="#fff" shapeRendering="crispEdges" aria-hidden="true"><path d="M1.500 0v2.500h9V0M1.500 5.500h9v5h-9zM1.500 16v-2.500h9V16M14.500 0v4M14.500 8v8" /><path d="M13 4h3v3h-3z" fill="#fff" stroke="none" /></svg>
        </button>
        <div className="w-[7px]" />
        <button type="button" aria-label="File Explorer" className="mr-[9px] flex w-10 items-center justify-center border-b-2 border-[#76b9ed]">
          <svg width="22" height="19" viewBox="0 0 22 19" aria-hidden="true"><path d="M0 1.500L1 .5h7l2 2h11l1 1V18H0z" fill="#f5c84c" /><path d="M0 4h22v14H0z" fill="#fde28a" /><path d="M4 19v-7.500l1.500-1.500h11l1.500 1.500V19h-4v-4H8v4z" fill="#3fb4e8" /></svg>
        </button>
        <button type="button" aria-label="Chrome" className="mr-[5px] flex w-10 items-center justify-center border-b-2 border-[#76b9ed]">
          <svg width="22" height="22" viewBox="0 0 22 22" aria-hidden="true"><circle cx="11" cy="11" r="11" fill="#dd4b3e" /><path d="M11 11L1.500 5.500A11 11 0 0 0 10 22l5.500-8.500z" fill="#1da35e" /><path d="M11 6h9.800A11 11 0 0 1 10 22l5.500-8.500z" fill="#fdd247" /><circle cx="11" cy="11" r="5" fill="#fff" /><circle cx="11" cy="11" r="4" fill="#4a8cf0" /></svg>
        </button>
        <button type="button" aria-label="Quartus II" className="flex w-12 items-center justify-center border-b-2 border-[#76b9ed] bg-[#3a3e45]"><Logo size={24} /></button>
        <div className="grow" />
        <div className="flex items-center">
          <button type="button" aria-label="People" className="mr-[22px]">
            <svg width="16" height="16" viewBox="0 0 16 16" fill="none" stroke="#fff" strokeWidth="1.200" aria-hidden="true"><circle cx="5" cy="8" r="2.300" /><path d="M1 15c0-6 8-6 8 0" /><circle cx="11" cy="3" r="2.300" /><path d="M9.500 7c2.500-2 5.500 0 5.500 3" /></svg>
          </button>
          <button type="button" aria-label="Hidden icons" className="mr-[10px]">
            <svg width="13" height="8" viewBox="0 0 13 8" fill="none" stroke="#fff" strokeWidth="1.300" aria-hidden="true"><path d="M1 7l5.500-5.500L12 7" /></svg>
          </button>
          <button type="button" aria-label="Network" className="mr-2">
            <svg width="16" height="14" viewBox="0 0 16 14" fill="none" stroke="#fff" shapeRendering="crispEdges" aria-hidden="true"><path d="M5 1.500h10.500v8H3M8.500 10v3M5 12.500h8M.5.5h4v4h-4zM2.500 5v8" /></svg>
          </button>
          <button type="button" aria-label="Volume" className="mr-[10px]">
            <svg width="16" height="14" viewBox="0 0 16 14" fill="none" stroke="#fff" aria-hidden="true"><path d="M.5 5h2L6 2v10L2.500 9h-2zM8 5c1 1 1 3 0 4M10 3.500c2 2 2 5 0 7M12 2c3 3 3 7 0 10" /></svg>
          </button>
          <span className="w-[24px]">ENG</span>
          <div className="ml-[10px] w-[56px] text-center leading-[17px]"><div>2:45 μμ</div><div>9/5/2019</div></div>
          <div className="ml-[5px] h-[39px] w-[3px] border-l border-[#505860]" />
        </div>
      </footer>
    </div>
  );
}
